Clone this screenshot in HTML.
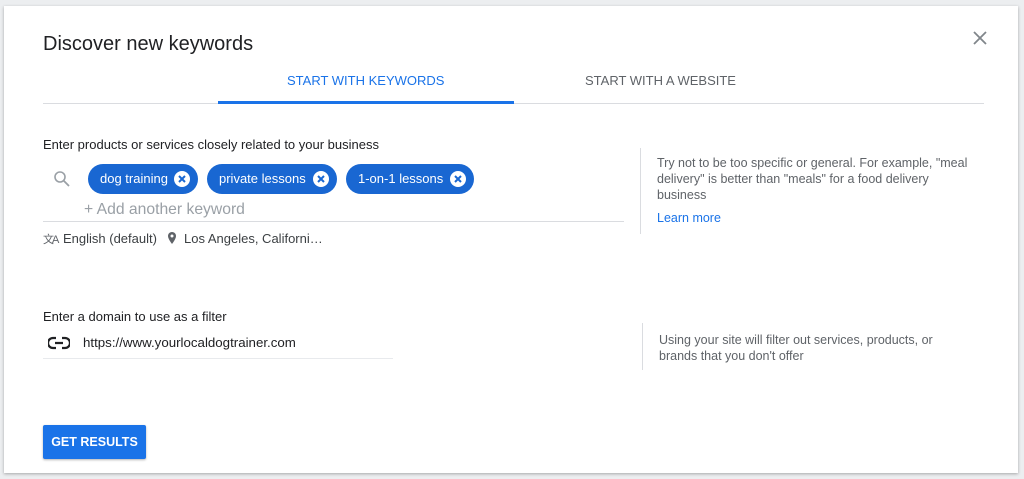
<!DOCTYPE html>
<html><head><style>
*{margin:0;padding:0;box-sizing:border-box}
body{width:1024px;height:479px;background:#eceef0;font-family:"Liberation Sans",sans-serif;position:relative;overflow:hidden}
.d{position:absolute;left:4px;top:6px;width:1014px;height:467px;background:#fff;box-shadow:0 1px 3px rgba(0,0,0,.3)}
.a{position:absolute;white-space:nowrap}
.chip{position:absolute;top:164px;height:30px;border-radius:15px;background:#1967d2;color:#fff;font-size:13px;line-height:30px;padding-left:12px}
.x{position:absolute;right:8px;top:7px;width:16px;height:16px;border-radius:50%;background:#fff}
.x svg{position:absolute;left:0;top:0}
.g{color:#5f6368;font-size:12.5px;line-height:16px}
</style></head><body>
<div class="d"></div>
<div class="a" style="left:43px;top:33px;font-size:20px;color:#202124">Discover new keywords</div>
<svg class="a" style="left:972px;top:30px" width="16" height="16"><path d="M2 2L14 14M14 2L2 14" stroke="#80868b" stroke-width="1.8"/></svg>
<div class="a" style="left:287px;top:73px;font-size:13px;color:#1a73e8">START WITH KEYWORDS</div>
<div class="a" style="left:585px;top:73px;font-size:13px;color:#5f6368">START WITH A WEBSITE</div>
<div class="a" style="left:43px;top:103px;width:941px;height:1px;background:#dadce0"></div>
<div class="a" style="left:218px;top:101px;width:296px;height:3px;background:#1a73e8"></div>
<div class="a" style="left:43px;top:137px;font-size:13px;color:#202124">Enter products or services closely related to your business</div>
<svg class="a" style="left:53px;top:170px" width="18" height="18"><circle cx="7" cy="7" r="5" fill="none" stroke="#9aa0a6" stroke-width="1.6"/><path d="M11 11L16 16" stroke="#9aa0a6" stroke-width="1.8"/></svg>
<div class="chip" style="left:88px;width:110px">dog training<span class="x"><svg width="16" height="16"><path d="M5 5L11 11M11 5L5 11" stroke="#1967d2" stroke-width="2"/></svg></span></div>
<div class="chip" style="left:207px;width:130px">private lessons<span class="x"><svg width="16" height="16"><path d="M5 5L11 11M11 5L5 11" stroke="#1967d2" stroke-width="2"/></svg></span></div>
<div class="chip" style="left:346px;width:128px">1-on-1 lessons<span class="x"><svg width="16" height="16"><path d="M5 5L11 11M11 5L5 11" stroke="#1967d2" stroke-width="2"/></svg></span></div>
<div class="a" style="left:84px;top:201px;font-size:15.7px;color:#9aa0a6">+ Add another keyword</div>
<div class="a" style="left:43px;top:221px;width:581px;height:1px;background:#dadce0"></div>
<div class="a" style="left:43px;top:231px;font-size:11px;color:#5f6368;letter-spacing:-2px">文A</div>
<div class="a" style="left:63px;top:231px;font-size:13px;color:#3c4043">English (default)</div>
<svg class="a" style="left:167px;top:231px" width="10" height="14"><path d="M5 1C2.5 1 1 3 1 5c0 3 4 8 4 8s4-5 4-8c0-2-1.5-4-4-4z" fill="#5f6368"/><circle cx="5" cy="5" r="1.5" fill="#fff"/></svg>
<div class="a" style="left:184px;top:231px;font-size:13px;color:#3c4043">Los Angeles, Californi…</div>
<div class="a" style="left:640px;top:148px;width:1px;height:86px;background:#dadce0"></div>
<div class="a g" style="left:657px;top:155px;white-space:normal;width:315px">Try not to be too specific or general. For example, "meal delivery" is better than "meals" for a food delivery business</div>
<div class="a" style="left:657px;top:211px;font-size:12.5px;color:#1a73e8">Learn more</div>
<div class="a" style="left:43px;top:309px;font-size:13px;color:#202124">Enter a domain to use as a filter</div>
<svg class="a" style="left:48px;top:336px" width="22" height="14"><path d="M8 2H5a5 5 0 000 10h3M14 2h3a5 5 0 010 10h-3M7 7h8" fill="none" stroke="#202124" stroke-width="2.2"/></svg>
<div class="a" style="left:83px;top:335px;font-size:13.3px;color:#202124">https://www.yourlocaldogtrainer.com</div>
<div class="a" style="left:43px;top:358px;width:350px;height:1px;background:#e8eaed"></div>
<div class="a" style="left:642px;top:323px;width:1px;height:47px;background:#dadce0"></div>
<div class="a g" style="left:659px;top:332px;white-space:normal;width:300px">Using your site will filter out services, products, or brands that you don't offer</div>
<div class="a" style="left:43px;top:425px;width:103px;height:34px;background:#1a73e8;border-radius:2px;box-shadow:0 1px 2px rgba(0,0,0,.3);color:#fff;font-size:12.5px;font-weight:bold;line-height:34px;text-align:center">GET RESULTS</div>
</body></html>
